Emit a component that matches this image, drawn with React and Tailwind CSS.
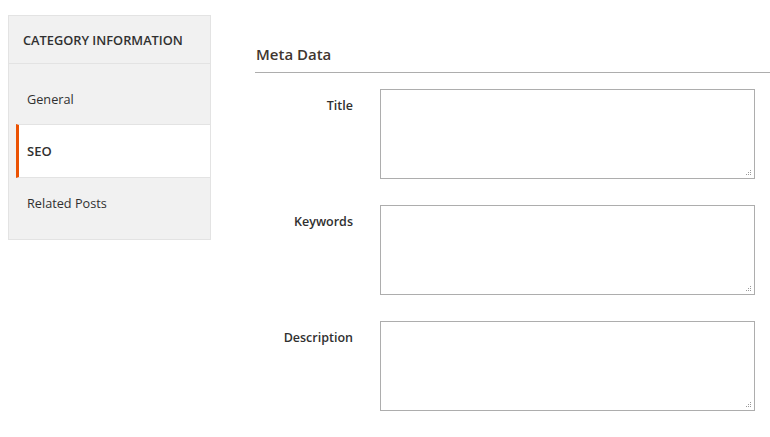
import React from "react";

const tabs = [
  { title: "General", active: false },
  { title: "SEO", active: true },
  { title: "Related Posts", active: false },
];

const fields = ["Title", "Keywords", "Description"];

function Sidebar() {
  return (
    <div className="w-[203px] shrink-0 border border-[#e3e3e3] bg-[#f1f1f1]">
      <div className="h-[48px] border-b border-[#e3e3e3] pl-[14px] pt-[14px] text-[12.8px] font-semibold uppercase leading-[20px] text-[#303030]">
        Category Information
      </div>
      <ul className="ml-[7px]">
        {tabs.map((tab, i) => (
          <li
            key={tab.title}
            className={
              tab.active
                ? "h-[54px] border-b border-t border-[#e3e3e3] border-l-[3px] border-l-[#eb5202] bg-white pl-[8px] pt-[16px] text-[13px] font-semibold leading-[20px] text-[#303030]"
                : i === 0
                ? "h-[60px] pl-[11px] pt-[25px] text-[12.7px] leading-[20px] text-[#303030]"
                : "h-[61px] pl-[11px] pt-[15px] text-[12.7px] leading-[20px] text-[#303030]"
            }
          >
            {tab.title}
          </li>
        ))}
      </ul>
    </div>
  );
}

function Grip() {
  return (
    <svg className="absolute bottom-[3px] right-[3px]" width="7" height="7" viewBox="0 0 7 7">
      <g fill="#9a9a9a">
        <rect x="5" y="1" width="1" height="1" />
        <rect x="3" y="3" width="1" height="1" />
        <rect x="5" y="3" width="1" height="1" />
        <rect x="1" y="5" width="1" height="1" />
        <rect x="3" y="5" width="1" height="1" />
        <rect x="5" y="5" width="1" height="1" />
      </g>
    </svg>
  );
}

function Field({ label }) {
  return (
    <div className="flex items-start">
      <label className="w-[125px] shrink-0 pr-[27px] pt-[7px] text-right text-[12.5px] font-semibold leading-[20px] text-[#303030]">
        {label}
      </label>
      <div className="relative h-[90px] w-[375px]">
        <textarea className="block h-full w-full resize-none border border-[#adadad] bg-white outline-none" />
        <Grip />
      </div>
    </div>
  );
}

export default function App() {
  return (
    <div
      className="flex h-[437px] w-[770px] items-start overflow-hidden bg-white pl-[8px] pt-[15px]"
      style={{ fontFamily: "'Open Sans', sans-serif" }}
    >
      <Sidebar />
      <div className="ml-[44px] flex-1">
        <div className="mr-[-10px] border-b border-[#adadad] pb-[7px] pt-[28px]">
          <h2 className="pl-[1px] text-[15px] font-semibold leading-[22px] text-[#41362f]">Meta Data</h2>
        </div>
        <div className="flex flex-col gap-[26px] pt-[16px]">
          {fields.map((f) => (
            <Field key={f} label={f} />
          ))}
        </div>
      </div>
    </div>
  );
}
